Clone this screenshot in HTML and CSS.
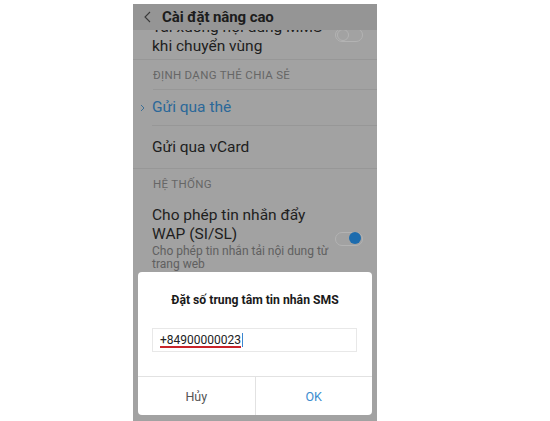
FILE: index.html
```html
<!DOCTYPE html>
<html lang="vi">
<head>
<meta charset="utf-8">
<link rel="stylesheet" href="styles.css">
</head>
<body>
<div class="screen">
  <header class="appbar">
    <svg class="back" width="7" height="12" viewBox="0 0 7 12"><path d="M6 1 L1 6 L6 11" fill="none" stroke="#3a3a3a" stroke-width="1.1"/></svg>
    <span class="appbar-title">Cài đặt nâng cao</span>
  </header>
  <div class="list">
    <div class="group">
      <div class="item item-first">
        <div class="gutter"></div>
        <div class="item-body">
          <div class="item-text">
            <div class="item-title">Tải xuống nội dung MMS<br>khi chuyển vùng</div>
          </div>
          <span class="toggle"><span class="knob"></span></span>
        </div>
      </div>
    </div>
    <div class="group">
      <div class="section">ĐỊNH DẠNG THẺ CHIA SẺ</div>
      <div class="item item-sel">
        <div class="gutter"><svg width="5" height="8" viewBox="0 0 5 8"><path d="M1 1 L4 4 L1 7" fill="none" stroke="#3c6f96" stroke-width="1"/></svg></div>
        <div class="item-body"><div class="item-title blue">Gửi qua thẻ</div></div>
      </div>
      <div class="item item-last">
        <div class="gutter"></div>
        <div class="item-body"><div class="item-title">Gửi qua vCard</div></div>
      </div>
    </div>
    <div class="section section-plain">HỆ THỐNG</div>
    <div class="item item-wap">
      <div class="gutter"></div>
      <div class="item-body">
        <div class="item-text">
          <div class="item-title">Cho phép tin nhắn đẩy<br>WAP (SI/SL)</div>
          <div class="item-sub">Cho phép tin nhắn tải nội dung từ<br>trang web</div>
        </div>
        <span class="toggle toggle-on"><span class="knob"></span></span>
      </div>
    </div>
  </div>
  <div class="dialog">
    <div class="dialog-title">Đặt số trung tâm tin nhắn SMS</div>
    <div class="dialog-input"><span class="num">+84900000023</span><span class="caret"></span></div>
    <div class="dialog-actions">
      <div class="btn btn-cancel">Hủy</div>
      <div class="btn btn-ok">OK</div>
    </div>
  </div>
</div>
</body>
</html>
```

FILE: styles.css
```css
html, body {
  margin: 0;
  padding: 0;
  background: #ffffff;
}
body {
  font-family: Roboto, "Noto Sans", "DejaVu Sans", sans-serif;
  width: 550px;
  height: 421px;
  overflow: hidden;
}
.screen {
  position: relative;
  margin: 4px 0 0 133px;
  width: 244px;
  height: 417px;
  background: #a2a2a2;
  overflow: hidden;
  display: flex;
  flex-direction: column;
}
.appbar {
  position: relative;
  z-index: 2;
  flex: 0 0 26px;
  height: 26px;
  background: #959595;
  display: flex;
  align-items: center;
  padding-left: 11px;
  box-sizing: border-box;
}
.back {
  margin-right: 11px;
  margin-top: -1px;
}
.appbar-title {
  font-size: 15px;
  font-weight: 700;
  color: #1c1c1c;
  letter-spacing: -0.1px;
}
.list {
  flex: 1;
  overflow: hidden;
  display: flex;
  flex-direction: column;
}
.group {
  border-bottom: 1px solid #979797;
}
.item {
  display: flex;
}
.gutter {
  flex: 0 0 19px;
  display: flex;
  align-items: center;
  justify-content: flex-end;
  padding-right: 7px;
  box-sizing: border-box;
}
.item-body {
  flex: 1;
  display: flex;
  align-items: center;
  border-bottom: 1px solid #979797;
  padding-right: 14px;
}
.item-last .item-body,
.item-first .item-body,
.item-wap .item-body {
  border-bottom: none;
}
.item-text {
  flex: 1;
}
.item-title {
  font-size: 15.5px;
  line-height: 19px;
  color: #1e1e1e;
}
.item-title.blue {
  color: #2b6899;
}
.item-sub {
  font-size: 12px;
  line-height: 13px;
  color: #606060;
  margin-top: 1px;
}
.item-first {
  margin-top: -12px;
}
.item-first .item-body {
  padding-bottom: 3px;
}
.item-sel .item-body {
  height: 35px;
}
.item-last .item-body {
  height: 42px;
}
.item-wap .item-body {
  padding-top: 7px;
  padding-bottom: 8px;
}
.section {
  height: 29px;
  display: flex;
  align-items: center;
  margin-left: 20px;
  font-size: 11.5px;
  letter-spacing: 0.3px;
  color: #666666;
  border-bottom: 1px solid #979797;
}
.section-plain {
  height: 30px;
  border-bottom: none;
}
.toggle {
  position: relative;
  width: 26px;
  height: 12px;
  border: 1px solid #b3b3b3;
  border-radius: 8px;
  flex: 0 0 auto;
}
.toggle .knob {
  position: absolute;
  top: 0;
  left: 1px;
  width: 10px;
  height: 10px;
  border-radius: 50%;
  border: 1px solid #b3b3b3;
}
.item-first .toggle {
  margin-top: -4px;
}
.toggle-on .knob {
  left: auto;
  right: 1px;
  top: -0.5px;
  width: 12px;
  height: 12px;
  border: none;
  background: #1d6cae;
}
.dialog {
  position: absolute;
  left: 5px;
  right: 5px;
  top: 268px;
  height: 143px;
  background: #ffffff;
  border-radius: 4px;
  display: flex;
  flex-direction: column;
}
.dialog-title {
  padding-top: 20px;
  line-height: 16px;
  text-align: center;
  font-size: 12.2px;
  font-weight: 700;
  color: #1a1a1a;
}
.dialog-input {
  margin: 20px 15px 0 14px;
  height: 24px;
  border: 1px solid #e8e8e8;
  box-sizing: border-box;
  display: flex;
  align-items: center;
  padding-left: 7px;
}
.num {
  font-size: 12px;
  color: #222222;
  text-decoration: underline;
  text-decoration-color: #c8242a;
  text-decoration-thickness: 1.5px;
  text-underline-offset: 2px;
}
.caret {
  width: 1px;
  height: 14px;
  background: #3b86d0;
  margin-left: 1px;
}
.dialog-actions {
  margin-top: auto;
  height: 38px;
  border-top: 1px solid #e2e2e2;
  display: flex;
}
.btn {
  flex: 1;
  display: flex;
  align-items: center;
  justify-content: center;
  font-size: 12.5px;
}
.btn-cancel {
  color: #555555;
  border-right: 1px solid #e2e2e2;
}
.btn-ok {
  color: #3d8dcf;
}
```
